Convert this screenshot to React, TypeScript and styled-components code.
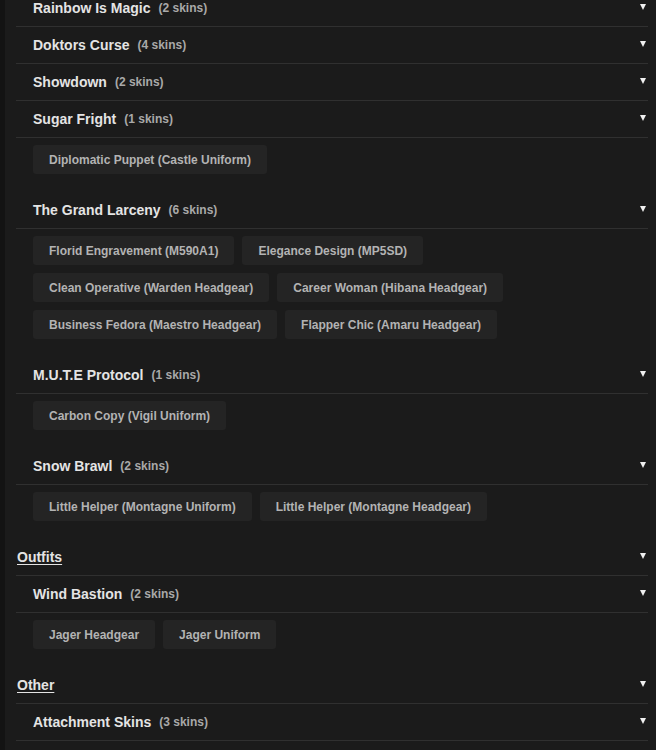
import React from "react";
import styled, { createGlobalStyle } from "styled-components";

const GlobalStyle = createGlobalStyle`
  html, body {
    margin: 0;
    padding: 0;
    background: #1b1b1b;
    overflow: hidden;
  }
  body {
    font-family: "Liberation Sans", Arial, sans-serif;
  }
`;

const Page = styled.div`
  height: 750px;
  border-left: 5px solid #131313;
  padding: 0 8px 0 11px;
  overflow: hidden;
`;

const List = styled.div`
  margin-top: -10px;
`;

const Header = styled.div<{ $top?: boolean }>`
  display: flex;
  align-items: center;
  height: 36px;
  padding-left: ${(p) => (p.$top ? "1px" : "17px")};
  padding-right: 2px;
  border-bottom: 1px solid #303030;
  cursor: pointer;
`;

const Name = styled.span<{ $top?: boolean }>`
  color: #e4e4e4;
  font-size: 14px;
  font-weight: bold;
  text-decoration: ${(p) => (p.$top ? "underline" : "none")};
  text-underline-offset: 2px;
`;

const Count = styled.span`
  margin-left: 8px;
  color: #a9a9a9;
  font-size: 12px;
  font-weight: bold;
`;

const Arrow = styled.span`
  margin-left: auto;
  width: 0;
  height: 0;
  margin-top: -2px;
  border-left: 3.5px solid transparent;
  border-right: 3.5px solid transparent;
  border-top: 6px solid #f0f0f0;
`;

const Chips = styled.div`
  display: flex;
  flex-wrap: wrap;
  gap: 8px 8px;
  padding: 7px 0 18px 17px;
`;

const Chip = styled.div`
  height: 29px;
  display: flex;
  align-items: center;
  padding: 0 16px;
  background: #242424;
  border-radius: 3px;
  color: #b3b3b3;
  font-size: 12px;
  font-weight: bold;
  white-space: nowrap;
`;

type Group = { name: string; skins: string[]; open?: boolean; count?: number };
type Section = { title?: string; groups: Group[] };

const sections: Section[] = [
  {
    groups: [
      { name: "Rainbow Is Magic", skins: [], count: 2 },
      { name: "Doktors Curse", skins: [], count: 4 },
      { name: "Showdown", skins: [], count: 2 },
      { name: "Sugar Fright", open: true, skins: ["Diplomatic Puppet (Castle Uniform)"] },
      {
        name: "The Grand Larceny",
        open: true,
        skins: [
          "Florid Engravement (M590A1)",
          "Elegance Design (MP5SD)",
          "Clean Operative (Warden Headgear)",
          "Career Woman (Hibana Headgear)",
          "Business Fedora (Maestro Headgear)",
          "Flapper Chic (Amaru Headgear)",
        ],
      },
      { name: "M.U.T.E Protocol", open: true, skins: ["Carbon Copy (Vigil Uniform)"] },
      {
        name: "Snow Brawl",
        open: true,
        skins: ["Little Helper (Montagne Uniform)", "Little Helper (Montagne Headgear)"],
      },
    ],
  },
  {
    title: "Outfits",
    groups: [{ name: "Wind Bastion", open: true, skins: ["Jager Headgear", "Jager Uniform"] }],
  },
  {
    title: "Other",
    groups: [{ name: "Attachment Skins", skins: [], count: 3 }],
  },
];

function GroupBlock({ group }: { group: Group }) {
  const n = group.count ?? group.skins.length;
  return (
    <>
      <Header>
        <Name>{group.name}</Name>
        <Count>({n} skins)</Count>
        <Arrow />
      </Header>
      {group.open && (
        <Chips>
          {group.skins.map((s) => (
            <Chip key={s}>{s}</Chip>
          ))}
        </Chips>
      )}
    </>
  );
}

export default function App() {
  return (
    <Page>
      <GlobalStyle />
      <List>
        {sections.map((sec, i) => (
          <React.Fragment key={i}>
            {sec.title && (
              <Header $top>
                <Name $top>{sec.title}</Name>
                <Arrow />
              </Header>
            )}
            {sec.groups.map((g) => (
              <GroupBlock key={g.name} group={g} />
            ))}
          </React.Fragment>
        ))}
      </List>
    </Page>
  );
}
